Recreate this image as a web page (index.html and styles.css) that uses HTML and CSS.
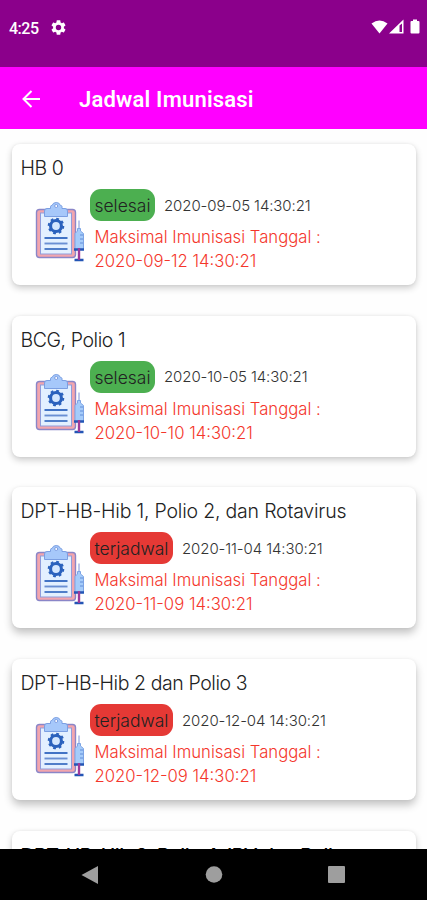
FILE: index.html
```html
<!DOCTYPE html>
<html lang="id">
<head>
    <meta charset="UTF-8">
    <meta name="viewport" content="width=device-width, initial-scale=1.0">
    <title>Jadwal Imunisasi</title>
    <link rel="stylesheet" href="styles.css">
</head>
<body>
    <!-- clipboard + syringe, reused by every card -->
    <svg class="defs" width="0" height="0">
        <symbol id="clipboard" viewBox="0 0 50 62">
            <rect x="1.5" y="8.5" width="39" height="48" rx="3" fill="#f3a5ad" stroke="#8a86c8" stroke-width="1.4"/>
            <rect x="5.5" y="12" width="31" height="41" fill="#e3f0ff" stroke="#8f9ddb" stroke-width="1"/>
            <path d="M9.500 15.500V10Q9.500 7.500 12 7.500H15.500V5.500Q15.500 4.500 17 4.500A4.500 4.500 0 0 1 25.500 4.500Q27 4.500 27 5.500V7.500H30Q32.500 7.500 32.500 10V15.500Z" fill="#a6c8fa" stroke="#7b9fe2" stroke-width="1"/>
            <circle cx="21.200" cy="5" r="1.500" fill="#fff" stroke="#6d8fda" stroke-width="0.800"/>
            <circle cx="21" cy="25" r="7" fill="#2b62bd"/>
            <circle cx="21" cy="25" r="7.300" fill="none" stroke="#2b62bd" stroke-width="2" stroke-dasharray="2.800 2.930"/>
            <circle cx="21" cy="25" r="3.900" fill="#d4e7ff"/>
            <g stroke-width="1.900">
                <path d="M9.500 37H32.500" stroke="#386cc2"/>
                <path d="M9.500 42.500H32.500" stroke="#6a8fd3"/>
                <path d="M9.500 48H32.500" stroke="#4878c7"/>
            </g>
            <path d="M44 19.500V29" stroke="#7b91d7" stroke-width="1"/>
            <path d="M40 48.500V32.500L42.500 30V27.500H45.500V30L48.500 32.500V48.500Z" fill="#a5ccfa" stroke="#7da4e5" stroke-width="1"/>
            <path d="M45 34H48M45 38H48M45 42H48" stroke="#5c87d5" stroke-width="0.900"/>
            <path d="M39 48.500H49M39.500 59H48.500" stroke="#2355b5" stroke-width="2.400"/>
            <path d="M44 47V59" stroke="#9d3a9b" stroke-width="2.400"/>
        </symbol>
    </svg>

    <div class="status-bar">
        <span class="clock">4:25</span>
        <svg class="gear" viewBox="2 2 20 20" width="15" height="15">
            <path fill="#fff" fill-rule="evenodd" d="M19.140 12.940c.04-.3.060-.61.060-.94 0-.32-.020-.64-.070-.94l2.030-1.580c.18-.14.23-.41.120-.61l-1.920-3.320c-.12-.22-.37-.29-.59-.22l-2.390.96c-.5-.38-1.030-.7-1.620-.94L14.400 2.810c-.04-.24-.24-.41-.48-.41h-3.840c-.24 0-.43.17-.47.41L9.250 5.350c-.59.24-1.130.57-1.620.94L5.240 5.330c-.22-.08-.47 0-.59.22L2.740 8.870c-.12.21-.08.47.12.610l2.030 1.580c-.05.3-.09.630-.09.940s.02.640.07.940l-2.030 1.580c-.18.140-.23.410-.12.610l1.920 3.320c.12.220.37.290.59.220l2.390-.96c.5.380 1.030.7 1.620.940l.36 2.540c.05.240.24.410.48.410h3.840c.24 0 .44-.17.47-.41l.36-2.540c.59-.24 1.130-.56 1.620-.94l2.390.960c.22.080.47 0 .59-.22l1.920-3.320c.12-.22.070-.47-.12-.61zM12 15.600A3.600 3.600 0 1 1 12 8.400a3.600 3.600 0 0 1 0 7.200z"/>
        </svg>
        <svg class="signals" viewBox="0 0 50 16" width="50" height="16">
            <g fill="#fff">
                <path d="M0.500 4.500Q8.500 -1.500 16.500 4.500L8.500 14.500Z"/>
                <path fill-rule="evenodd" d="M18 14.500L32.500 0.500V14.500ZM28.500 6.500V13H31V4.500Z"/>
                <path d="M39.500 3Q39.500 2 40.500 2H42V0.500H46V2H47.500Q48.500 2 48.500 3V13.500Q48.500 14.500 47.500 14.500H40.500Q39.500 14.500 39.500 13.500Z"/>
            </g>
        </svg>
    </div>

    <div class="app-bar">
        <svg viewBox="0 0 20 20" width="20" height="20">
            <path d="M19 10H2.500M10.500 2L2.500 10L10.500 18" fill="none" stroke="#fff" stroke-width="2"/>
        </svg>
        <h1>Jadwal Imunisasi</h1>
    </div>

    <div class="list">
        <div class="card">
            <h2 class="short">HB 0</h2>
            <div class="row">
                <svg class="icon"><use href="#clipboard"/></svg>
                <div class="info">
                    <div class="schedule">
                        <span class="badge done">selesai</span>
                        <span class="date">2020-09-05 14:30:21</span>
                    </div>
                    <p class="limit">Maksimal Imunisasi Tanggal :<br>2020-09-12 14:30:21</p>
                </div>
            </div>
        </div>

        <div class="card">
            <h2 class="short">BCG, Polio 1</h2>
            <div class="row">
                <svg class="icon"><use href="#clipboard"/></svg>
                <div class="info">
                    <div class="schedule">
                        <span class="badge done">selesai</span>
                        <span class="date">2020-10-05 14:30:21</span>
                    </div>
                    <p class="limit">Maksimal Imunisasi Tanggal :<br>2020-10-10 14:30:21</p>
                </div>
            </div>
        </div>

        <div class="card raised">
            <h2>DPT-HB-Hib 1, Polio 2, dan Rotavirus</h2>
            <div class="row">
                <svg class="icon"><use href="#clipboard"/></svg>
                <div class="info">
                    <div class="schedule">
                        <span class="badge planned">terjadwal</span>
                        <span class="date">2020-11-04 14:30:21</span>
                    </div>
                    <p class="limit">Maksimal Imunisasi Tanggal :<br>2020-11-09 14:30:21</p>
                </div>
            </div>
        </div>

        <div class="card raised">
            <h2 class="short">DPT-HB-Hib 2 dan Polio 3</h2>
            <div class="row">
                <svg class="icon"><use href="#clipboard"/></svg>
                <div class="info">
                    <div class="schedule">
                        <span class="badge planned">terjadwal</span>
                        <span class="date">2020-12-04 14:30:21</span>
                    </div>
                    <p class="limit">Maksimal Imunisasi Tanggal :<br>2020-12-09 14:30:21</p>
                </div>
            </div>
        </div>

        <div class="card">
            <h2 class="last">DPT-HB-Hib 3, Polio 4, IPV dan Polio</h2>
        </div>
    </div>

    <div class="nav-bar">
        <svg viewBox="0 0 20 20" width="20" height="20"><path d="M0.500 10L17 1V19Z" fill="#9e9e9e"/></svg>
        <svg viewBox="0 0 20 20" width="20" height="20"><circle cx="10" cy="9.500" r="8.300" fill="#9e9e9e"/></svg>
        <svg viewBox="0 0 20 20" width="20" height="20"><rect x="1" y="1" width="17" height="17" rx="1" fill="#9e9e9e"/></svg>
    </div>
</body>
</html>
```

FILE: styles.css
```css
* {
    box-sizing: border-box;
}
body {
    margin: 0;
    height: 900px;
    display: flex;
    flex-direction: column;
    overflow: hidden;
    background-color: #fefefe;
    font-family: Inter, sans-serif;
    font-weight: 270;
}
h1, h2, p {
    margin: 0;
}
.defs {
    position: absolute;
}

/* top bars */
.status-bar {
    height: 67px;
    flex: none;
    display: flex;
    align-items: center;
    padding: 0 6px 13px 9px;
    background-color: #8b008b;
    color: white;
}
.clock {
    width: 42px;
    font: 500 16px Roboto, sans-serif;
    letter-spacing: -0.5px;
    padding-top: 2px;
}
.signals {
    margin-left: auto;
}
.app-bar {
    height: 61.5px;
    flex: none;
    display: flex;
    align-items: center;
    gap: 38px;
    padding: 2px 21px 0;
    background-color: #ff00ff;
    color: white;
}
.app-bar h1 {
    font: 600 22px Roboto, sans-serif;
    letter-spacing: 0.2px;
    padding-top: 1px;
}

/* schedule */
.list {
    flex: 1;
    min-height: 0;
    overflow: hidden;
    display: flex;
    flex-direction: column;
    gap: 30.7px;
    padding: 15.5px 11px 0 12px;
}
.card {
    flex: none;
    height: 141px;
    padding: 9px 9px 9px 8.5px;
    border-radius: 8px;
    background-color: white;
    box-shadow: 0 3px 7px rgba(0, 0, 0, 0.2), 0 0 3px rgba(0, 0, 0, 0.06);
}
.raised {
    box-shadow: 0 5px 8px rgba(0, 0, 0, 0.24), 0 0 3px rgba(0, 0, 0, 0.05);
}
.card h2 {
    font-size: 19.5px;
    font-weight: 270;
    line-height: 30px;
    letter-spacing: -0.2px;
    white-space: nowrap;
    color: #222;
}
.card .short {
    letter-spacing: -0.42px;
}
.card .last {
    font-weight: 500;
    letter-spacing: -0.45px;
    padding-top: 1px;
    color: black;
}
.row {
    display: flex;
    gap: 5px;
    padding: 6px 0 0 14.5px;
}
.icon {
    width: 50px;
    height: 62px;
    margin-top: 12px;
}
.schedule {
    display: flex;
    align-items: center;
    gap: 9px;
}
.badge {
    height: 32px;
    line-height: 33px;
    text-align: center;
    border-radius: 11px;
    font-size: 17.5px;
    white-space: nowrap;
    color: #222;
}
.done {
    width: 65px;
    background-color: #4caf50;
}
.planned {
    width: 83px;
    background-color: #e53935;
}
.date {
    font-size: 15px;
    letter-spacing: -0.1px;
    white-space: nowrap;
    color: #333;
}
.limit {
    padding: 4px 0 0 4.5px;
    font-size: 16.7px;
    line-height: 24px;
    white-space: nowrap;
    color: #f4362b;
}

.nav-bar {
    height: 51px;
    flex: none;
    display: flex;
    align-items: center;
    justify-content: center;
    gap: 103px;
    background-color: black;
}
```
